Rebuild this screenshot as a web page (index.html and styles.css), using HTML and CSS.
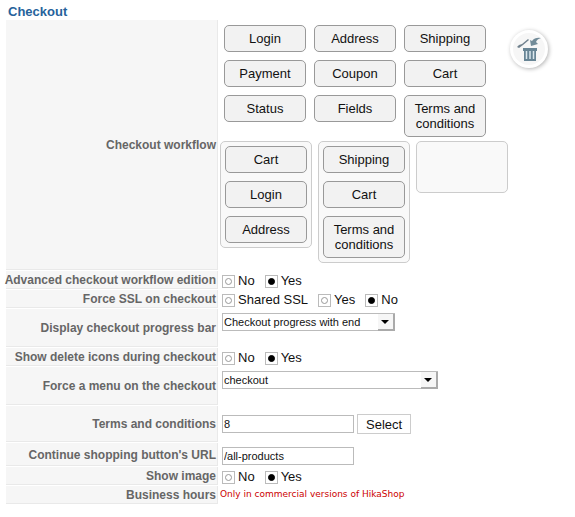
FILE: index.html
```html
<!DOCTYPE html>
<html lang="en">
<head>
    <meta charset="UTF-8">
    <meta name="viewport" content="width=device-width, initial-scale=1.0">
    <title>Checkout</title>
    <link rel="stylesheet" href="styles.css">
</head>
<body>
    <form class="settings">
        <h1>Checkout</h1>

        <div class="row">
            <div class="label">Checkout workflow</div>
            <div class="workflow">
                <div class="workflow-top">
                    <ul class="palette">
                        <li class="step" draggable="true">Login</li>
                        <li class="step" draggable="true">Address</li>
                        <li class="step" draggable="true">Shipping</li>
                        <li class="step" draggable="true">Payment</li>
                        <li class="step" draggable="true">Coupon</li>
                        <li class="step" draggable="true">Cart</li>
                        <li class="step" draggable="true">Status</li>
                        <li class="step" draggable="true">Fields</li>
                        <li class="step" draggable="true">Terms and conditions</li>
                    </ul>
                    <button type="button" class="trash" aria-label="Delete">
                        <svg width="24" height="26" viewBox="0 0 24 26">
                            <path d="M0 11 L2 9 L5 8 L11 3 L12 4 L6 9 L2 12 Z" fill="#71828e"/>
                            <path d="M14 10 L13 4 L15 5 Q18 1 24 2 Q20 3 19 6 L21 8 Z" fill="#718b98"/>
                            <path d="M6 12 H20 V15 H19 V25 H7 V15 H6 Z" fill="#688595"/>
                            <path d="M9.500 15 V23 M13 15 V23 M16.500 15 V23" stroke="#dce8ee" stroke-width="1.500"/>
                        </svg>
                    </button>
                </div>
                <div class="pages">
                    <ul class="page">
                        <li class="step" draggable="true">Cart</li>
                        <li class="step" draggable="true">Login</li>
                        <li class="step" draggable="true">Address</li>
                    </ul>
                    <ul class="page">
                        <li class="step" draggable="true">Shipping</li>
                        <li class="step" draggable="true">Cart</li>
                        <li class="step" draggable="true">Terms and conditions</li>
                    </ul>
                    <ul class="page"></ul>
                </div>
            </div>
        </div>

        <div class="row" role="radiogroup" aria-labelledby="edition-label">
            <div class="label" id="edition-label">Advanced checkout workflow edition</div>
            <div class="field">
                <label class="option"><input type="radio" name="edition" value="0">No</label>
                <label class="option"><input type="radio" name="edition" value="1" checked>Yes</label>
            </div>
        </div>

        <div class="row" role="radiogroup" aria-labelledby="ssl-label">
            <div class="label" id="ssl-label">Force SSL on checkout</div>
            <div class="field">
                <label class="option"><input type="radio" name="ssl" value="shared">Shared SSL</label>
                <label class="option"><input type="radio" name="ssl" value="1">Yes</label>
                <label class="option"><input type="radio" name="ssl" value="0" checked>No</label>
            </div>
        </div>

        <div class="row row-tall">
            <label class="label" for="progress-bar">Display checkout progress bar</label>
            <div class="field field-top">
                <span class="select">
                    <select id="progress-bar">
                        <option>Checkout progress with end</option>
                    </select>
                </span>
            </div>
        </div>

        <div class="row" role="radiogroup" aria-labelledby="delete-label">
            <div class="label" id="delete-label">Show delete icons during checkout</div>
            <div class="field">
                <label class="option"><input type="radio" name="delete" value="0">No</label>
                <label class="option"><input type="radio" name="delete" value="1" checked>Yes</label>
            </div>
        </div>

        <div class="row row-tall">
            <label class="label" for="menu">Force a menu on the checkout</label>
            <div class="field field-top">
                <span class="select select-wide">
                    <select id="menu">
                        <option>checkout</option>
                    </select>
                </span>
            </div>
        </div>

        <div class="row row-terms">
            <label class="label" for="terms">Terms and conditions</label>
            <div class="field field-terms">
                <input type="text" id="terms" class="text" value="8">
                <button type="button" class="button">Select</button>
            </div>
        </div>

        <div class="row">
            <label class="label" for="shopping-url">Continue shopping button's URL</label>
            <div class="field field-top">
                <input type="text" id="shopping-url" class="text" value="/all-products">
            </div>
        </div>

        <div class="row" role="radiogroup" aria-labelledby="image-label">
            <div class="label" id="image-label">Show image</div>
            <div class="field">
                <label class="option"><input type="radio" name="image" value="0">No</label>
                <label class="option"><input type="radio" name="image" value="1" checked>Yes</label>
            </div>
        </div>

        <div class="row">
            <div class="label">Business hours</div>
            <div class="notice">Only in commercial versions of HikaShop</div>
        </div>
    </form>
</body>
</html>
```

FILE: styles.css
```css
*,
*::before,
*::after {
    box-sizing: border-box;
}

body {
    margin: 0;
    padding: 4px 6px;
    background-color: #fff;
    color: #111;
    font-family: "Liberation Sans", Arial, sans-serif;
    font-size: 13px;
    line-height: 15px;
}

h1 {
    margin: 0;
    padding-left: 2px;
    color: #26629b;
    font-size: 13px;
    line-height: 15px;
}

ul {
    margin: 0;
    padding: 0;
    list-style: none;
}

/* Rows: grey label on the left, field on the right */
.settings {
    display: flex;
    flex-direction: column;
    gap: 1px;
}

.row {
    display: grid;
    grid-template-columns: 212px 1fr;
    column-gap: 2px;
    min-height: 18px;
}

.row-tall {
    min-height: 38px;
}

.row-terms {
    min-height: 36px;
}

.label {
    display: flex;
    align-items: center;
    justify-content: flex-end;
    padding-top: 2px;
    padding-right: 1px;
    background-color: #f6f6f6;
    border-right: 1px solid #e9e9e9;
    border-bottom: 1px solid #e9e9e9;
    color: #666;
    font-size: 12px;
    font-weight: bold;
    white-space: nowrap;
}

.field {
    display: flex;
    align-items: center;
    padding-left: 2px;
}

.field-top {
    align-items: flex-start;
    padding-top: 4px;
    padding-bottom: 1px;
}

.field-terms {
    gap: 3px;
}

/* Workflow */
.workflow {
    padding: 5px 0 7px;
}

.workflow-top {
    display: flex;
    align-items: flex-start;
    gap: 24px;
    padding-left: 4px;
}

.palette {
    display: grid;
    grid-template-columns: repeat(3, 82px);
    align-items: start;
    gap: 8px;
}

.step {
    padding: 5px;
    background-color: #f2f2f2;
    border: 1px solid #999;
    border-radius: 5px;
    text-align: center;
    cursor: move;
}

.pages {
    display: flex;
    align-items: flex-start;
    gap: 6px;
    margin-top: 4px;
}

.page {
    display: flex;
    flex-direction: column;
    gap: 8px;
    width: 92px;
    min-height: 52px;
    padding: 4px;
    background-color: #f9f9f9;
    border: 1px solid #ccc;
    border-radius: 5px;
}

.trash {
    display: flex;
    align-items: center;
    justify-content: center;
    width: 38px;
    height: 38px;
    margin-top: 5px;
    padding: 0;
    background-color: #f6f6f6;
    border: 3px solid #fff;
    border-radius: 50%;
    box-shadow: 1px 1px 4px rgba(0, 0, 0, 0.3);
    cursor: pointer;
}

/* Controls */
.option {
    display: flex;
    align-items: center;
    gap: 3px;
    margin-right: 10px;
}

input[type="radio"] {
    display: flex;
    align-items: center;
    justify-content: center;
    appearance: none;
    width: 13px;
    height: 13px;
    margin: 2px 0 0;
    background-color: #fff;
    border: 1px solid #bbb;
}

input[type="radio"]::before {
    content: "";
    width: 7px;
    height: 7px;
    border: 1px solid #999;
    border-radius: 50%;
}

input[type="radio"]:checked::before {
    background-color: #000;
    border-color: #000;
}

.text {
    width: 132px;
    height: 18px;
    padding: 0 1px;
    border: 1px solid #bbb;
    color: #111;
    font: 11px "Liberation Sans", Arial, sans-serif;
}

.select {
    position: relative;
    width: 173px;
}

.select-wide {
    width: 216px;
}

.select select {
    display: block;
    appearance: none;
    width: 100%;
    height: 18px;
    padding: 0 18px 0 1px;
    background-color: #fff;
    border: 1px solid #bbb;
    border-radius: 0;
    color: #111;
    font: 11px "Liberation Sans", Arial, sans-serif;
}

/* Raised arrow button at the end of the drop-down */
.select::after {
    content: "";
    position: absolute;
    top: 1px;
    right: 0;
    width: 17px;
    height: 17px;
    background-color: #f6f6f6;
    border-right: 2px solid #aaa;
    border-bottom: 2px solid #aaa;
    pointer-events: none;
}

.select::before {
    content: "";
    position: absolute;
    z-index: 1;
    top: 7px;
    right: 6px;
    border: 4px solid transparent;
    border-top-color: #000;
    border-bottom: 0;
    pointer-events: none;
}

.button {
    height: 20px;
    padding: 0 8px;
    background-color: #fff;
    border: 1px solid #ccc;
    color: #111;
    font: 13px "Liberation Sans", Arial, sans-serif;
    cursor: pointer;
}

.notice {
    color: #c00;
    font-family: Verdana, "DejaVu Sans", sans-serif;
    font-size: 9px;
    line-height: 17px;
}
```
